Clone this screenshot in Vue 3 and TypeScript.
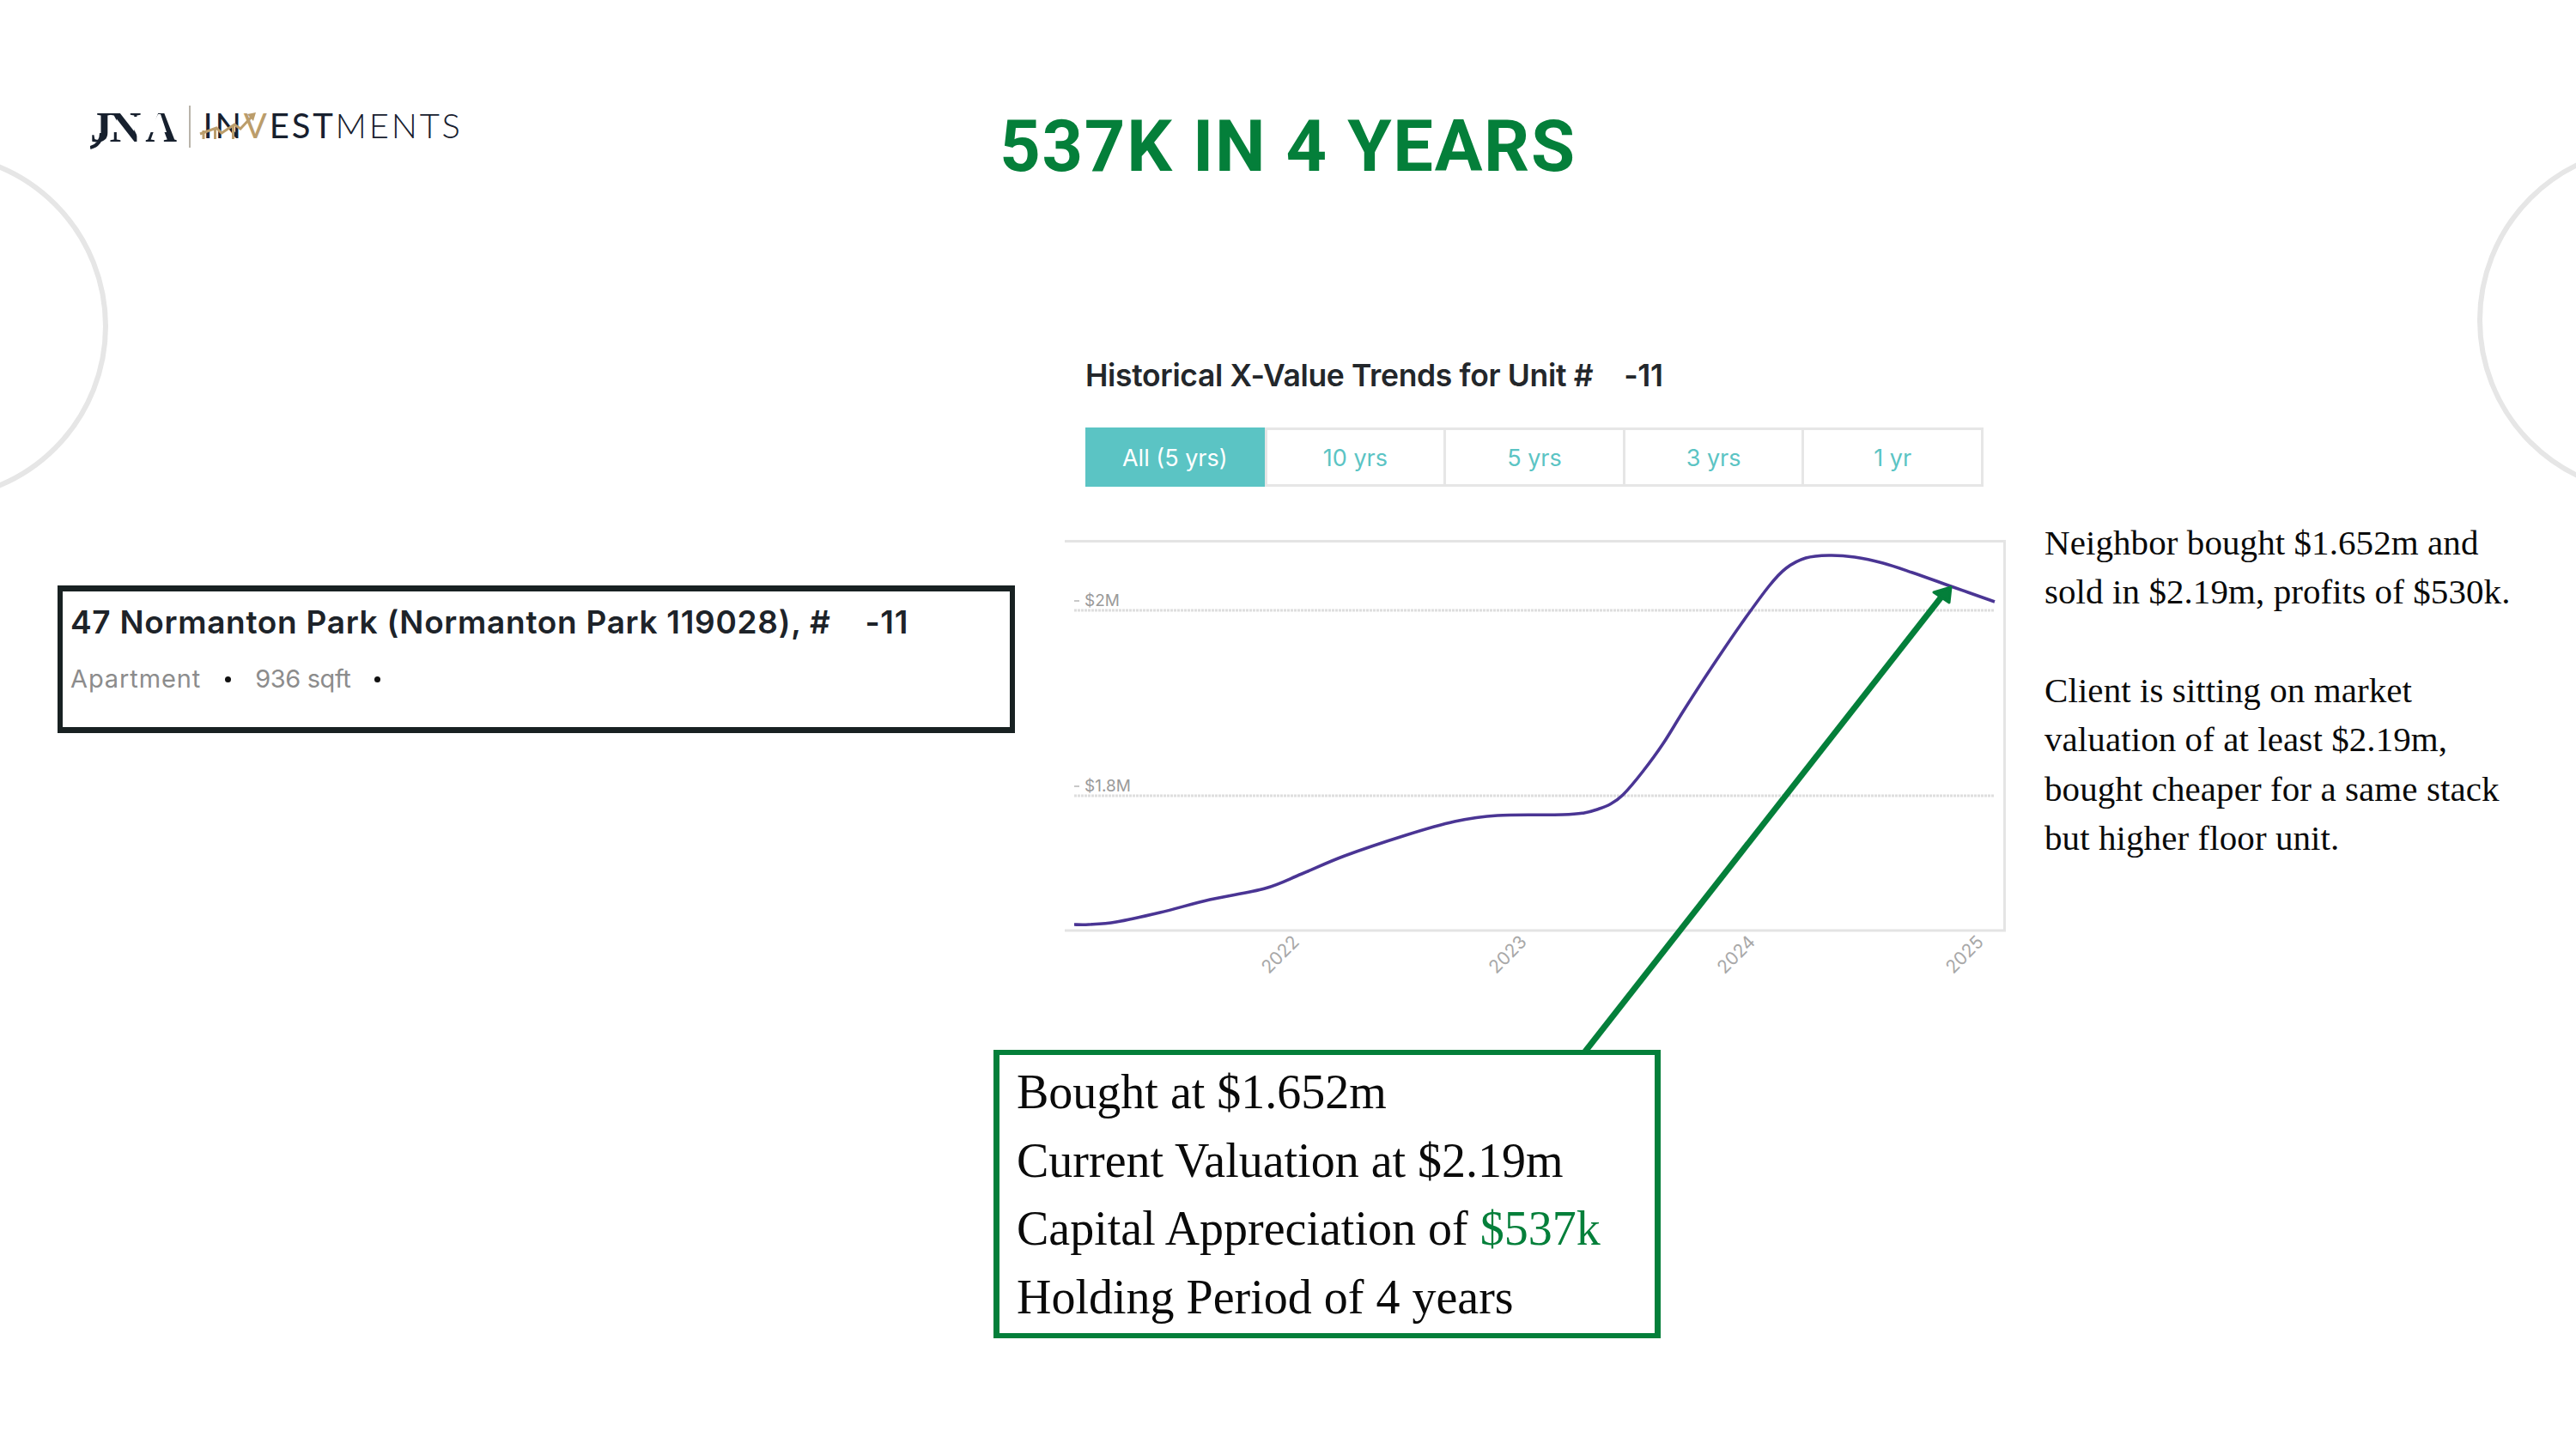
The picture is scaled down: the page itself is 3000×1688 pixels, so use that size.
<script setup lang="ts">
import { computed } from 'vue'

const tabs = ['All (5 yrs)', '10 yrs', '5 yrs', '3 yrs', '1 yr']

// Curve samples given in page coordinates, shifted to the chart's origin (1240, 629)
const pts: [number, number][] = [
  [1251, 1077], [1268, 1077], [1300, 1074], [1351, 1063], [1409, 1048], [1473, 1035], [1516, 1018],
  [1566, 997], [1637, 973], [1694, 957], [1744, 950], [1820, 949], [1845, 947], [1860, 943],
  [1875, 937], [1890, 926], [1913, 899], [1937, 866], [1960, 829], [1993, 778], [2027, 728],
  [2060, 683], [2080, 662], [2103, 650], [2130, 647], [2160, 649],
  [2193, 656], [2227, 667], [2272, 683], [2323, 701]
].map(([x, y]) => [x - 1240, y - 629] as [number, number])

const curve = computed(() => {
  let d = `M${pts[0][0]} ${pts[0][1]}`
  for (let i = 0; i < pts.length - 1; i++) {
    const p0 = pts[Math.max(0, i - 1)]
    const p1 = pts[i]
    const p2 = pts[i + 1]
    const p3 = pts[Math.min(pts.length - 1, i + 2)]
    const c1x = p1[0] + (p2[0] - p0[0]) / 6
    const c1y = p1[1] + (p2[1] - p0[1]) / 6
    const c2x = p2[0] - (p3[0] - p1[0]) / 6
    const c2y = p2[1] - (p3[1] - p1[1]) / 6
    d += ` C${c1x.toFixed(1)} ${c1y.toFixed(1)} ${c2x.toFixed(1)} ${c2y.toFixed(1)} ${p2[0]} ${p2[1]}`
  }
  return d
})

const years = [
  { label: '2022', x: 251 },
  { label: '2023', x: 516 },
  { label: '2024', x: 782 },
  { label: '2025', x: 1048 }
]
</script>

<template>
  <div class="slide">
    <div class="ring ring-left"></div>
    <div class="ring ring-right"></div>

    <header class="header">
      <div class="logo">
        <span class="logo-mark"><span class="m-j">J</span><span class="m-n">N</span><span class="m-a">A</span></span>
        <svg class="logo-stencil" viewBox="0 0 110 60" width="110" height="60">
          <path d="M13 32C13 42 8 47 0 49" fill="none" stroke="#17202e" stroke-width="4" />
          <polygon points="24,12 28,12 38,31 24,31" fill="#fff" />
          <polygon points="44,13 59,13 59,38 56,38" fill="#fff" />
          <polygon points="68,31 79,10 82,10 89,31" fill="#fff" />
        </svg>
        <span class="logo-sep"></span>
        <span class="logo-word"><span class="w1">IN</span><span class="w-gold">V</span><span class="w2">EST</span><span class="w3">MENTS</span></span>
        <svg class="logo-swoosh" viewBox="0 0 90 40" width="90" height="40">
          <path d="M5 24V34M18.5 22V34M39.5 19V34" fill="none" stroke="#bb9d6b" stroke-width="3" />
          <polyline points="1,28 20,21 26,27 41,17 48,22 62,7" fill="none" stroke="#bb9d6b" stroke-width="3" />
          <polygon points="66,3 56,5 63,13" fill="#bb9d6b" />
        </svg>
      </div>
      <h1 class="title">537K IN 4 YEARS</h1>
    </header>

    <section class="row">
      <div class="col-left">
        <div class="card">
          <div class="card-title">47 Normanton Park (Normanton Park 119028), #<span class="gap"></span>-11</div>
          <div class="card-sub"><span>Apartment</span><i class="dot"></i><span class="sqft">936 sqft</span><i class="dot"></i></div>
        </div>
      </div>

      <div class="col-chart">
        <h2 class="chart-title">Historical X-Value Trends for Unit #<span class="gap2"></span>-11</h2>
        <div class="tabs">
          <div v-for="(t, i) in tabs" :key="t" class="tab" :class="{ active: i === 0 }">{{ t }}</div>
        </div>
        <svg class="chart" viewBox="0 0 1096 545" width="1096" height="545">
          <path d="M0 1.5H1094.5V455H0" fill="none" stroke="#e4e4e4" stroke-width="3" />
          <line x1="11" y1="82" x2="1083" y2="82" stroke="#dedede" stroke-width="3" stroke-dasharray="3 1" />
          <line x1="11" y1="298" x2="1083" y2="298" stroke="#dedede" stroke-width="3" stroke-dasharray="3 1" />
          <line x1="11" y1="71" x2="17" y2="71" stroke="#c8c8c8" stroke-width="2" />
          <line x1="11" y1="287" x2="17" y2="287" stroke="#c8c8c8" stroke-width="2" />
          <text x="23" y="77" class="ylab">$2M</text>
          <text x="23" y="293" class="ylab">$1.8M</text>
          <path :d="curve" fill="none" stroke="#4a3594" stroke-width="3.6" />
          <text
            v-for="y in years"
            :key="y.label"
            :x="y.x"
            y="490"
            class="xlab"
            text-anchor="middle"
            :transform="`rotate(-45 ${y.x} 483)`"
          >{{ y.label }}</text>
        </svg>
      </div>

      <div class="col-notes">
        <p class="note">Neighbor bought $1.652m and<br />sold in $2.19m, profits of $530k.</p>
        <p class="note">Client is sitting on market<br />valuation of at least $2.19m,<br />bought cheaper for a same stack<br />but higher floor unit.</p>
      </div>
    </section>

    <div class="callout">
      <div>Bought at $1.652m</div>
      <div>Current Valuation at $2.19m</div>
      <div>Capital Appreciation of <span class="green">$537k</span></div>
      <div>Holding Period of 4 years</div>
    </div>

    <svg class="arrow" viewBox="0 0 3000 1688" width="3000" height="1688">
      <line x1="1846" y1="1225" x2="2262" y2="694" stroke="#047f3a" stroke-width="7" />
      <polygon points="2272,684 2252,690 2270,702" fill="#047f3a" stroke="#047f3a" stroke-width="3" stroke-linejoin="round" />
    </svg>
  </div>
</template>

<style scoped>
.slide {
  position: relative;
  width: 3000px;
  height: 1688px;
  overflow: hidden;
  background: #fff;
  display: flex;
  flex-direction: column;
  font-family: "Inter", "Liberation Sans", sans-serif;
}
.ring {
  position: absolute;
  width: 408px;
  height: 408px;
  border: 6px solid #e6e6e6;
  border-radius: 50%;
  box-sizing: border-box;
}
.ring-left { left: -282px; top: 176px; }
.ring-right { left: 2885px; top: 169px; }

.header {
  position: relative;
  height: 420px;
  flex: none;
}
.logo {
  position: absolute;
  left: 105px;
  top: 123px;
  display: flex;
  align-items: flex-start;
}
.logo-mark {
  display: flex;
  width: 115px;
  font-family: "Liberation Serif", serif;
  font-weight: 700;
  font-size: 51px;
  line-height: 50px;
  color: #17202e;
}
.m-j { margin-right: -3px; }
.m-a { margin-left: 5px; }
.logo-stencil {
  position: absolute;
  left: 0;
  top: 0;
}
.logo-sep {
  width: 1.5px;
  height: 49px;
  background: #b9b4aa;
}
.logo-word {
  margin-left: 15px;
  font-family: "Lato", sans-serif;
  font-size: 40px;
  line-height: 46px;
  letter-spacing: 2.8px;
  color: #17202e;
  white-space: nowrap;
}
.w1 { font-weight: 400; }
.w-gold { color: #bb9d6b; font-weight: 400; }
.w2 { font-weight: 400; }
.w3 { font-weight: 300; }
.logo-swoosh {
  position: absolute;
  left: 127px;
  top: 5px;
}
.title {
  margin: 0;
  padding-top: 126px;
  text-align: center;
  color: #047f3a;
  font-family: "Roboto", sans-serif;
  font-weight: 700;
  font-size: 83px;
  line-height: 90px;
  letter-spacing: 1.7px;
}

.row {
  display: grid;
  grid-template-columns: 1240px 1096px 1fr;
  flex: none;
}
.col-left {
  padding: 262px 0 0 67px;
}
.card {
  box-sizing: border-box;
  width: 1115px;
  height: 172px;
  border: solid #182122;
  border-width: 7px 6px;
  padding: 13px 0 0 9px;
  color: #1d2329;
}
.card-title {
  font-size: 37px;
  line-height: 46px;
  font-weight: 600;
  letter-spacing: 0.7px;
  white-space: nowrap;
}
.gap { display: inline-block; width: 40px; }
.gap2 { display: inline-block; width: 36px; }
.card-sub {
  margin-top: 25px;
  display: flex;
  align-items: center;
  color: #8c8c8c;
  font-size: 29px;
  line-height: 36px;
  letter-spacing: 0.9px;
}
.sqft { letter-spacing: -0.4px; }
.dot {
  width: 7px;
  height: 7px;
  border-radius: 50%;
  background: #111;
  margin: 0 28px;
}
.col-chart {
  display: flex;
  flex-direction: column;
}
.chart-title {
  margin: 0 0 0 24px;
  height: 78px;
  font-size: 35.5px;
  line-height: 36px;
  font-weight: 600;
  letter-spacing: -0.35px;
  color: #23272b;
  white-space: nowrap;
}
.tabs {
  margin-left: 24px;
  width: 1046px;
  height: 69px;
  display: grid;
  grid-template-columns: repeat(5, 1fr);
  box-sizing: border-box;
  border: 3px solid #e6e6e6;
  border-left: 0;
}
.tab {
  display: flex;
  align-items: center;
  justify-content: center;
  padding-top: 2px;
  color: #5bc4c4;
  font-size: 27px;
  border-left: 3px solid #e6e6e6;
}
.tab.active {
  background: #5bc4c4;
  color: #fff;
  border-left: 0;
  margin: -3px 0;
}
.chart {
  display: block;
  margin-top: 62px;
}
.ylab {
  font-family: "Inter", sans-serif;
  font-size: 19px;
  fill: #9a9a9a;
}
.xlab {
  font-family: "Inter", sans-serif;
  font-size: 21px;
  fill: #a8a8a8;
}
.col-notes {
  padding: 184px 0 0 45px;
}
.note {
  margin: 0 0 57px;
  font-family: "Liberation Serif", serif;
  font-size: 41px;
  line-height: 57.4px;
  letter-spacing: 0.08px;
  color: #0a0a0a;
  white-space: nowrap;
}
.callout {
  box-sizing: border-box;
  margin-left: 1157px;
  margin-top: 49px;
  width: 777px;
  height: 336px;
  border: solid #047f3a;
  border-width: 6px 7px;
  padding: 4px 0 0 20px;
  font-family: "Liberation Serif", serif;
  font-size: 56px;
  line-height: 79.7px;
  color: #0a0a0a;
  white-space: nowrap;
}
.green { color: #047f3a; }
.arrow {
  position: absolute;
  left: 0;
  top: 0;
  pointer-events: none;
}
</style>
